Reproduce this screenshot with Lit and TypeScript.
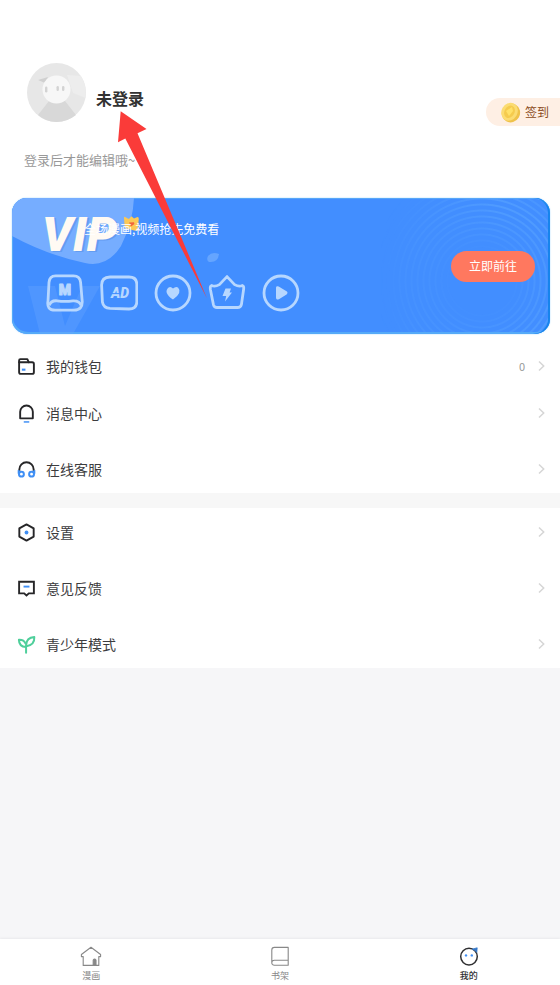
import { LitElement, html, css, svg, nothing } from "lit";
import { customElement } from "lit/decorators.js";

const icons: Record<string, unknown> = {
  wallet: svg`<g fill="none" stroke="#262628" stroke-width="1.8" stroke-linejoin="round" stroke-linecap="round"><path d="M2 14.5V3.2Q2 2 3.2 2H9.8L11.2 5H14.4Q16 5 16 6.6V14.4Q16 16 14.4 16H3.5Q2 16 2 14.5Z"/><path d="M2 5H11"/></g><path d="M4.6 12H8" stroke="#3f8ff5" stroke-width="2"/>`,
  bell: svg`<path d="M3 13.6V7.4a6 6 0 0 1 12 0v6.2Z" fill="none" stroke="#262628" stroke-width="1.8" stroke-linejoin="round"/><path d="M6.4 17H11.6" stroke="#3f8ff5" stroke-width="1.4"/>`,
  service: svg`<path d="M2.2 11V9a6.8 6.8 0 0 1 13.6 0v2" fill="none" stroke="#262628" stroke-width="1.8"/><g fill="none" stroke="#3f8ff5" stroke-width="1.9"><path d="M1.6 9.6V13"/><path d="M16.4 9.6V13"/><circle cx="4.2" cy="13.4" r="2.3"/><circle cx="13.8" cy="13.4" r="2.3"/></g>`,
  settings: svg`<path d="M9 1.3L15.8 5.1V12.9L9 16.7L2.2 12.9V5.1Z" fill="none" stroke="#262628" stroke-width="1.8" stroke-linejoin="round"/><circle cx="9" cy="9" r="1.8" fill="#3f8ff5"/>`,
  feedback: svg`<path d="M2 2.6H16V13.6H11.2L9 15.6L6.8 13.6H2Z" fill="none" stroke="#262628" stroke-width="1.8"/><path d="M6.2 7.2H11.8" stroke="#3f8ff5" stroke-width="1.8"/>`,
  sprout: svg`<g fill="none" stroke="#4fcf9b" stroke-width="1.9" stroke-linejoin="round" stroke-linecap="round"><path d="M8.6 16.8V9.6Q9 2.6 16.4 2Q16.8 9.4 9 10.6"/><path d="M8.4 11.4Q2 11 1.8 4.6Q6.6 4.4 8 8"/></g>`,
};

const perks = [
  svg`<path d="M9.5 1.8H27.5Q34 1.8 34.6 8.3L36.2 27Q36.8 36 28 36.2H9Q.4 36 2 27L3 8.3Q3.6 1.8 9.5 1.8Z"/><path d="M3.4 31.4Q4.5 26.4 11 26.8Q19 28 27 26.8Q33.8 26.6 35 31.4"/><text class="glyph" x="19" y="21" text-anchor="middle">M</text>`,
  svg`<path d="M10 3H29Q36.6 3 36.8 10V28Q36.6 35 29 35L10 34.4Q3.4 34 2.4 28L1.6 11Q1.6 3.4 10 3Z"/><text class="glyph glyph-italic" x="20" y="24" text-anchor="middle">AD</text><path d="M9 19.6H21" stroke="#428eff" stroke-width="1"/>`,
  svg`<circle cx="19" cy="19" r="17"/><path fill="currentColor" stroke="none" d="M19 25.5Q8.8 18.5 14.6 13.4Q17 12.2 19 14.6Q21.6 12 24 13.4Q28.8 18.5 19 25.5Z"/>`,
  svg`<path d="M3.6 11.5Q7 13.2 11.4 10.6L19 2.6L26.6 10.6Q31 13.2 34.4 11.5Q36.2 12 35.6 15.5L33.4 30.6Q32.6 33.5 29.5 33.5H9Q6.2 33.5 5.4 30.6L2.4 15.5Q1.8 12 3.6 11.5Z"/><path fill="currentColor" stroke="none" d="M17.5 14.5H23L21.6 18.4H24L17 27.5L18.2 22H14.5Z"/>`,
  svg`<circle cx="19" cy="19" r="17"/><path fill="currentColor" stroke-width="2" d="M15 13.8Q15 12.8 16.2 13.4L24 18Q25 18.8 24 19.6L16.4 24.4Q15 25 15 23.8Z"/>`,
];

const groups = [
  [
    { id: "wallet", label: "我的钱包", value: "0" },
    { id: "bell", label: "消息中心" },
    { id: "service", label: "在线客服" },
  ],
  [
    { id: "settings", label: "设置" },
    { id: "feedback", label: "意见反馈" },
    { id: "sprout", label: "青少年模式" },
  ],
];

const tabs = [
  { label: "漫画", icon: svg`<path d="M1.4 8.5L11 1.2L20.6 8.5V10.6H18.8V19.4H3.2V10.6H1.4Z"/><path d="M13.2 19V14Q14.6 12.2 16 14V19Z" fill="currentColor"/>` },
  { label: "书架", icon: svg`<path d="M19.2 19.2H5.4Q2.8 19.2 2.8 16.6V4Q2.8 1.4 5.4 1.4H19.2ZM2.8 16.6Q2.8 14.2 5.4 14.2H19.2"/>` },
  { label: "我的", active: true, icon: svg`<circle cx="11" cy="10.6" r="8.3" stroke-width="1.5"/><path d="M14 3.2L19.2 1.8L18.8 6.4Q17.4 4 14 3.2Z" fill="#3678c8" stroke="#3678c8" stroke-width=".8"/><g fill="#3f8ff5" stroke="none"><circle cx="8" cy="9.4" r="1.2"/><circle cx="13.8" cy="9.4" r="1.2"/></g>` },
];

@customElement("app-root")
export class AppRoot extends LitElement {
  static styles = css`
    :host {
      display: flex;
      flex-direction: column;
      position: relative;
      min-height: 100vh;
      overflow: hidden;
      background: #f6f6f8;
      color: #3c3c3e;
      font-family: "Noto Sans CJK SC", sans-serif;
      font-size: 14px;
      line-height: 20px;
    }
    * { box-sizing: border-box; }
    button {
      border: 0;
      padding: 0;
      background: none;
      color: inherit;
      font: inherit;
      cursor: pointer;
    }
    svg { display: block; flex: none; }
    .top { background: #fff; padding: 63px 0 8px; }
    .profile { display: flex; align-items: center; padding-left: 27px; gap: 10px; }
    .name { flex: 1; margin: 0; padding-top: 10px; font-size: 16px; line-height: 24px; font-weight: 700; color: #333; }
    .sign {
      display: flex;
      align-items: center;
      align-self: flex-end;
      gap: 4px;
      width: 74px;
      height: 28px;
      margin-bottom: -4px;
      padding-left: 14px;
      border-radius: 14px 0 0 14px;
      background: #feefe4;
      color: #8a4a20;
      font-size: 12px;
    }
    .hint { margin: 28px 24px; font-size: 13px; line-height: 20px; color: #999; }
    .card {
      position: relative;
      display: flex;
      align-items: center;
      justify-content: space-between;
      height: 136px;
      margin: 0 10px 0 12px;
      padding: 0 15px 0 30px;
      overflow: hidden;
      border-radius: 15px;
      background: #428eff;
      box-shadow: inset -2px 0 #1684ec, inset 0 1px #57a6f8, inset 1px -2px #55aaf8, 0 0 1px 1px #e5f4ff;
      color: #fff;
    }
    .decor { position: absolute; left: 0; top: 0; }
    .rings {
      position: absolute;
      right: 2px;
      top: 1px;
      bottom: 2px;
      width: 170px;
      background: repeating-radial-gradient(circle at 104px 82px, transparent 0 3px, #6db8ff55 4px 5px, transparent 6px);
      mask-image: radial-gradient(circle at 104px 82px, transparent 30px, #0008 50px, #000 80px, transparent 115px), linear-gradient(to right, transparent, #000 70%);
      mask-composite: intersect;
    }
    .offer { position: relative; align-self: flex-start; padding-top: 10px; }
    .vip { margin: 0; font: italic 900 48px/54px Roboto, sans-serif; color: #fffaf3; text-shadow: 2px 1px #3d77cf55; }
    .slogan { position: absolute; left: 42px; top: 21px; margin: 0; font-size: 12px; white-space: nowrap; }
    .crown { position: absolute; left: 81px; top: 17px; }
    .perks { display: flex; gap: 16px; margin: 12px 0 0; padding: 0 0 0 4px; list-style: none; color: #b7d7ff; }
    .glyph { font: 900 14px Roboto, sans-serif; fill: currentColor; stroke: currentColor; stroke-width: 1px; }
    .glyph-italic { font-style: italic; stroke: none; }
    .go {
      position: relative;
      width: 84px;
      height: 31px;
      border-radius: 16px;
      background: #ff785f;
      color: #fff;
      font-size: 12px;
    }
    .group { display: flex; flex-direction: column; gap: 8px; background: #fff; }
    .group + .group { border-top: 15px solid #f7f7f7; }
    .row { display: flex; align-items: center; height: 48px; padding: 0 13px 0 17px; gap: 10px; text-align: left; }
    .row-wallet { margin-bottom: -9px; }
    .label { flex: 1; }
    .value { font-size: 11px; color: #999; }
    .tabs { display: flex; margin-top: auto; height: 46px; padding-top: 7px; background: #fff; box-shadow: 0 -1px 2px #e9e9ec; }
    .tabs-inner { display: flex; flex: 1; margin: 0 -3px; }
    .tab { flex: 1; display: flex; flex-direction: column; align-items: center; color: #888; font-size: 9px; line-height: 14px; gap: 2px; }
    .tab-active { color: #303032; font-weight: 500; }
    .arrow { position: absolute; left: 116px; top: 108px; pointer-events: none; }
  `;

  render() {
    return html`
      <header class="top">
        <div class="profile">
          <svg width="59" height="59" viewBox="0 0 59 59" aria-hidden="true">
            <circle cx="29.5" cy="29.5" r="29.5" fill="#e7e7e7"/>
            <path d="M11 52L22 38H38L49 52Q40 59 29.5 59T11 52Z" fill="#d8d8d8"/>
            <path d="M40 12L54 13Q60 23 58.5 35L46 30Z" fill="#ededed"/>
            <path d="M11 17L21 14L18 20Z" fill="#d0d0d0"/>
            <circle cx="29.5" cy="26.5" r="14" fill="#f7f7f7"/>
            <g fill="#d3d3d3"><rect x="18" y="23.5" width="2.4" height="6" rx="1.2"/><rect x="29.5" y="23" width="2.4" height="5" rx="1.2"/><rect x="35" y="23" width="2.4" height="5" rx="1.2"/></g>
          </svg>
          <h1 class="name">未登录</h1>
          <button class="sign">
            <svg width="21" height="21" viewBox="0 0 21 21" aria-hidden="true">
              <ellipse cx="11" cy="11" rx="9" ry="9.5" transform="rotate(30 11 11)" fill="#efc24a"/>
              <ellipse cx="9.5" cy="9.8" rx="8" ry="9.2" transform="rotate(30 9.5 9.8)" fill="#fbdc72"/>
              <ellipse cx="9.5" cy="9.8" rx="5" ry="6.5" transform="rotate(30 9.5 9.8)" fill="#f5cb4e"/>
              <path d="M6 9L12 5L13 9L9 14Z" fill="#ffe168"/>
            </svg>签到
          </button>
        </div>
        <p class="hint">登录后才能编辑哦~</p>
        <section class="card">
          <svg class="decor" width="220" height="136" viewBox="0 0 220 136" aria-hidden="true">
            <path d="M0 0H122Q121 24 109 48Q95 70 73 65Q35 57 0 38Z" fill="#76adff"/>
            <path d="M16 88H43L53 128L70 88H88L61 136H28Z" fill="#68a7ff" opacity=".35"/>
            <path d="M196 58Q200 53 207 56Q206 65 197 64Q194 62 196 58Z" fill="#65a5ff"/>
          </svg>
          <div class="rings"></div>
          <div class="offer">
            <h2 class="vip">VIP</h2>
            <svg class="crown" width="17" height="17" viewBox="0 0 17 17" aria-hidden="true">
              <path d="M1 3Q1 1 3 2.4L5.8 4L8.5 1.2L11 3.4L14.4 2Q16 2 15.8 4L14.8 13Q14.4 16 12 15.8L4 13.5Q1.6 12.8 1.6 11Z" fill="#fbc957"/>
              <path d="M6 7.6L11 7.2L11.4 9L8 11.4Z" fill="#f0663d"/>
            </svg>
            <p class="slogan">全场漫画,视频抢先免费看</p>
            <ul class="perks">
              ${perks.map((p) => html`<li><svg width="38" height="38" viewBox="0 0 38 38" fill="none" stroke="currentColor" stroke-width="2.8" stroke-linejoin="round" aria-hidden="true">${p}</svg></li>`)}
            </ul>
          </div>
          <button class="go">立即前往</button>
        </section>
      </header>
      <main>
        ${groups.map((g) => html`<section class="group">
          ${g.map((r: { id: string; label: string; value?: string }) => html`<button class="row row-${r.id}">
            <svg width="19" height="19" viewBox="0 0 18 18" aria-hidden="true">${icons[r.id]}</svg>
            <span class="label">${r.label}</span>
            ${r.value ? html`<span class="value">${r.value}</span>` : nothing}
            <svg width="12" height="12" viewBox="0 0 12 12" fill="none" stroke="#d6d6d6" stroke-width="1.5" aria-hidden="true"><path d="M4 1.5L8.7 6L4 10.5"/></svg>
          </button>`)}
        </section>`)}
      </main>
      <nav class="tabs">
        <div class="tabs-inner">
          ${tabs.map((t) => html`<button class="tab ${t.active ? "tab-active" : ""}">
            <svg width="22" height="21" viewBox="0 0 22 21" fill="none" stroke="currentColor" stroke-width="1.1" stroke-linejoin="round" aria-hidden="true">${t.icon}</svg>
            ${t.label}
          </button>`)}
        </div>
      </nav>
      <svg class="arrow" width="94" height="194" viewBox="0 0 94 194" aria-hidden="true">
        <path d="M4.7 3.2L30.5 21L21.5 25.3L91 190.5L9.3 30.5L2 34.3Z" fill="#fa3b39"/>
      </svg>
    `;
  }
}
